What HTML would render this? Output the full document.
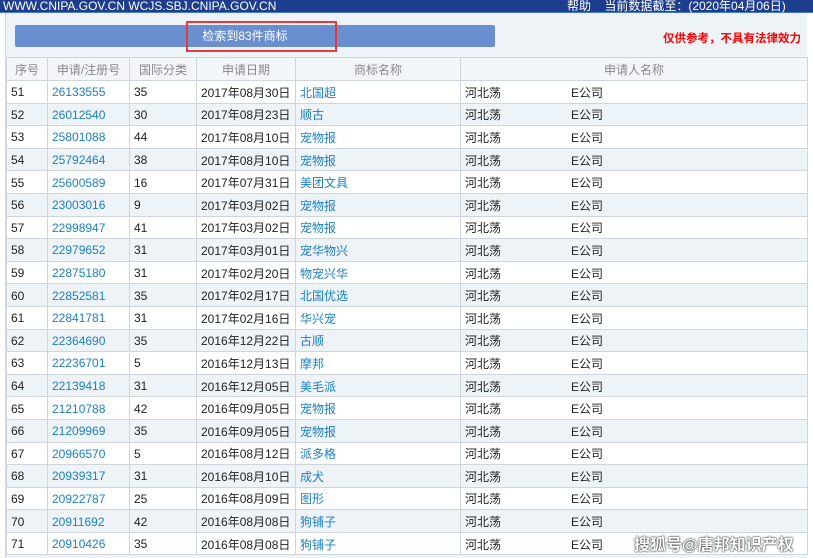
<!DOCTYPE html>
<html><head><meta charset="utf-8"><style>
*{margin:0;padding:0;box-sizing:border-box}
body{width:813px;height:558px;overflow:hidden;background:#fff;font-family:"Liberation Sans","Noto Sans CJK SC",sans-serif;font-size:12px;color:#222;position:relative}
.top{position:absolute;left:0;top:0;width:813px;height:13px;background:#1d3d8e;border-bottom:1px solid #4a78c8;color:#fff;font-size:12px;line-height:12px;white-space:nowrap}
.top .l{position:absolute;left:3px;top:0}
.top .r{position:absolute;left:567px;top:0}
.panel{position:absolute;left:5px;top:13px;width:802px;height:545px;background:#eef3f8;border-left:1px solid #d0d8e0}
.btn{position:absolute;left:15px;top:25px;width:480px;height:22px;background:#6a8fd0;border-radius:2px;color:#fff;font-size:12px;line-height:22px;text-align:center;padding-right:20px}
.red{position:absolute;left:186px;top:21px;width:151px;height:31px;border:2px solid #e83a3a}
.note{position:absolute;left:663px;top:30px;color:#f00;font-weight:bold;font-size:11.5px}
table{position:absolute;left:6px;top:57px;border-collapse:collapse;table-layout:fixed;width:801px}
td,th{border:1px solid #cfd5db;height:22.6px;padding:1px 0 0 4px;white-space:nowrap;overflow:hidden;font-weight:normal;text-align:left}
th{height:23px;color:#888;background:#f3f6f9;text-align:center;padding:0}
tr:nth-child(odd) td{background:#eef3f8}
tr:nth-child(even) td{background:#fff}
a{color:#1a7fc7;text-decoration:none}
.c{display:inline-block;width:106px}
.wm{position:absolute;left:634px;top:531px;color:#fff;font-size:16px;font-weight:bold;text-shadow:0 0 2px #333,0 0 1px #000}
</style></head><body>
<div class="top"><span class="l">WWW.CNIPA.GOV.CN WCJS.SBJ.CNIPA.GOV.CN</span><span class="r">帮助 &nbsp;&nbsp; 当前数据截至：(2020年04月06日)</span></div>
<div class="panel"></div>
<div class="btn">检索到83件商标</div>
<div class="red"></div>
<div class="note">仅供参考，不具有法律效力</div>
<table>
<colgroup><col style="width:41px"><col style="width:82px"><col style="width:67px"><col style="width:99px"><col style="width:165px"><col style="width:347px"></colgroup>
<tr><th>序号</th><th>申请/注册号</th><th>国际分类</th><th>申请日期</th><th>商标名称</th><th>申请人名称</th></tr>
<tr><td>51</td><td><a>26133555</a></td><td>35</td><td>2017年08月30日</td><td><a>北国超</a></td><td><span class="c">河北荡</span>E公司</td></tr>
<tr><td>52</td><td><a>26012540</a></td><td>30</td><td>2017年08月23日</td><td><a>顺古</a></td><td><span class="c">河北荡</span>E公司</td></tr>
<tr><td>53</td><td><a>25801088</a></td><td>44</td><td>2017年08月10日</td><td><a>宠物报</a></td><td><span class="c">河北荡</span>E公司</td></tr>
<tr><td>54</td><td><a>25792464</a></td><td>38</td><td>2017年08月10日</td><td><a>宠物报</a></td><td><span class="c">河北荡</span>E公司</td></tr>
<tr><td>55</td><td><a>25600589</a></td><td>16</td><td>2017年07月31日</td><td><a>美团文具</a></td><td><span class="c">河北荡</span>E公司</td></tr>
<tr><td>56</td><td><a>23003016</a></td><td>9</td><td>2017年03月02日</td><td><a>宠物报</a></td><td><span class="c">河北荡</span>E公司</td></tr>
<tr><td>57</td><td><a>22998947</a></td><td>41</td><td>2017年03月02日</td><td><a>宠物报</a></td><td><span class="c">河北荡</span>E公司</td></tr>
<tr><td>58</td><td><a>22979652</a></td><td>31</td><td>2017年03月01日</td><td><a>宠华物兴</a></td><td><span class="c">河北荡</span>E公司</td></tr>
<tr><td>59</td><td><a>22875180</a></td><td>31</td><td>2017年02月20日</td><td><a>物宠兴华</a></td><td><span class="c">河北荡</span>E公司</td></tr>
<tr><td>60</td><td><a>22852581</a></td><td>35</td><td>2017年02月17日</td><td><a>北国优选</a></td><td><span class="c">河北荡</span>E公司</td></tr>
<tr><td>61</td><td><a>22841781</a></td><td>31</td><td>2017年02月16日</td><td><a>华兴宠</a></td><td><span class="c">河北荡</span>E公司</td></tr>
<tr><td>62</td><td><a>22364690</a></td><td>35</td><td>2016年12月22日</td><td><a>古顺</a></td><td><span class="c">河北荡</span>E公司</td></tr>
<tr><td>63</td><td><a>22236701</a></td><td>5</td><td>2016年12月13日</td><td><a>摩邦</a></td><td><span class="c">河北荡</span>E公司</td></tr>
<tr><td>64</td><td><a>22139418</a></td><td>31</td><td>2016年12月05日</td><td><a>美毛派</a></td><td><span class="c">河北荡</span>E公司</td></tr>
<tr><td>65</td><td><a>21210788</a></td><td>42</td><td>2016年09月05日</td><td><a>宠物报</a></td><td><span class="c">河北荡</span>E公司</td></tr>
<tr><td>66</td><td><a>21209969</a></td><td>35</td><td>2016年09月05日</td><td><a>宠物报</a></td><td><span class="c">河北荡</span>E公司</td></tr>
<tr><td>67</td><td><a>20966570</a></td><td>5</td><td>2016年08月12日</td><td><a>派多格</a></td><td><span class="c">河北荡</span>E公司</td></tr>
<tr><td>68</td><td><a>20939317</a></td><td>31</td><td>2016年08月10日</td><td><a>成犬</a></td><td><span class="c">河北荡</span>E公司</td></tr>
<tr><td>69</td><td><a>20922787</a></td><td>25</td><td>2016年08月09日</td><td><a>图形</a></td><td><span class="c">河北荡</span>E公司</td></tr>
<tr><td>70</td><td><a>20911692</a></td><td>42</td><td>2016年08月08日</td><td><a>狗铺子</a></td><td><span class="c">河北荡</span>E公司</td></tr>
<tr><td>71</td><td><a>20910426</a></td><td>35</td><td>2016年08月08日</td><td><a>狗铺子</a></td><td><span class="c">河北荡</span>E公司</td></tr>
</table>
<div class="wm">搜狐号@唐邦知识产权</div>
</body></html>
